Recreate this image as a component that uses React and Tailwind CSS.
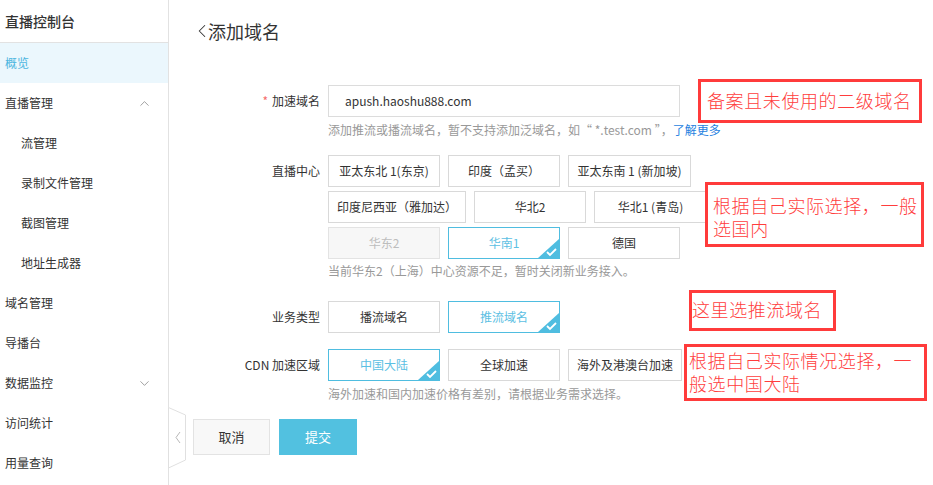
import { ChevronUp, ChevronDown, ChevronLeft } from "lucide-react";

const MENU = [
  { label: "概览", active: true },
  { label: "直播管理", arrow: "up" },
  { label: "流管理", sub: true },
  { label: "录制文件管理", sub: true },
  { label: "截图管理", sub: true },
  { label: "地址生成器", sub: true },
  { label: "域名管理" },
  { label: "导播台" },
  { label: "数据监控", arrow: "down" },
  { label: "访问统计" },
  { label: "用量查询" },
];

// selected corner: blue triangle with a white tick
function Tick() {
  return (
    <svg className="absolute right-0 bottom-0" width="21" height="19" viewBox="0 0 21 19">
      <polygon points="21,0 21,19 0,19" fill="#4fbde0" />
      <path d="M9 13 L12 16 L18 10" stroke="#fff" strokeWidth="1.8" fill="none" />
    </svg>
  );
}

function Opt({ w, children, selected, disabled }) {
  const tone = selected
    ? "border-[#4fbde0] text-[#5cc0e3]"
    : disabled
    ? "border-[#e3e3e3] bg-[#f7f7f7] text-[#bdbdbd]"
    : "border-[#d9d9d9] text-[#333]";
  return (
    <div className={`relative h-8 shrink-0 border flex items-center justify-center text-xs whitespace-nowrap ${tone} ${w}`}>
      {children}
      {selected && <Tick />}
    </div>
  );
}

function Row({ label, star, children, className = "" }) {
  return (
    <div className={`flex items-start ${className}`}>
      <div className="w-[159px] shrink-0 pr-2 h-8 flex items-center justify-end text-xs text-[#333] whitespace-nowrap">
        {star && <span className="text-[#f56c6c] mr-1">*</span>}
        {label}
      </div>
      <div>{children}</div>
    </div>
  );
}

function Note({ className, lines }) {
  return (
    <div className={`absolute border-[3px] border-[#ff3b3b] text-[#ff3d3d] text-[18px] tracking-[0.6px] font-light whitespace-nowrap ${className}`}>
      {lines.map(l => (
        <div key={l} className="leading-[23px] h-[23px]">{l}</div>
      ))}
    </div>
  );
}

export default function App() {
  return (
    <div className="relative w-[933px] h-[485px] overflow-hidden bg-white flex font-['Noto_Sans_CJK_SC',sans-serif] text-[#333]">
      {/* Sidebar */}
      <aside className="w-[169px] shrink-0 border-r border-[#e2e2e2]">
        <div className="h-[43px] border-b border-[#e2e2e2] px-[5px] flex items-center text-sm font-medium">
          直播控制台
        </div>
        {MENU.map(m => (
          <div
            key={m.label}
            className={`h-10 flex items-center justify-between pr-[16px] text-xs ${
              m.sub ? "pl-[21px]" : "pl-[5px]"
            } ${m.active ? "bg-[#ebf7fd] text-[#4cb6e0]" : ""}`}
          >
            <span>{m.label}</span>
            {m.arrow === "up" && <ChevronUp size={15} strokeWidth={1} className="text-[#666]" />}
            {m.arrow === "down" && <ChevronDown size={15} strokeWidth={1} className="text-[#666]" />}
          </div>
        ))}
      </aside>

      {/* collapse tab */}
      <svg className="absolute left-[168px] top-[407px]" width="19" height="62" viewBox="0 0 19 62">
        <polygon points="0.5,0.5 17.5,8 17.5,53 0.5,61" fill="#fff" stroke="#e0e0e0" />
        <path d="M12 25 L8 30.5 L12 36" stroke="#b8b8b8" strokeWidth="1" fill="none" />
      </svg>

      {/* Main */}
      <main className="flex-1">
        <div className="h-[62px] flex items-center pl-[22px] text-lg text-[#333]">
          <ChevronLeft size={22} strokeWidth={1.1} className="-mr-[5px]" />
          <span>添加域名</span>
        </div>

        <Row label="加速域名" star className="mt-[23px]">
          <div className="w-[352px] h-8 border border-[#dcdcdc] flex items-center pl-[16px] text-xs">
            apush.haoshu888.com
          </div>
          <div className="mt-[4px] leading-[18px] text-xs text-[#999] whitespace-nowrap">
            添加推流或播流域名，暂不支持添加泛域名，如“ *.test.com ”，<span className="text-[#1f7fe0]">了解更多</span>
          </div>
        </Row>

        <Row label="直播中心" className="mt-[16px]">
          <div className="flex gap-2">
            <Opt w="w-[112px]">亚太东北 1(东京)</Opt>
            <Opt w="w-[112px]">印度（孟买）</Opt>
            <Opt w="w-[123px]">亚太东南 1 (新加坡)</Opt>
          </div>
          <div className="flex gap-2 mt-1">
            <Opt w="w-[138px]">印度尼西亚（雅加达）</Opt>
            <Opt w="w-[112px]">华北2</Opt>
            <Opt w="w-[113px]">华北1 (青岛)</Opt>
          </div>
          <div className="flex gap-2 mt-1">
            <Opt w="w-[112px]" disabled>华东2</Opt>
            <Opt w="w-[112px]" selected>华南1</Opt>
            <Opt w="w-[112px]">德国</Opt>
          </div>
          <div className="mt-[3px] leading-[18px] text-xs text-[#999] whitespace-nowrap">
            当前华东2（上海）中心资源不足，暂时关闭新业务接入。
          </div>
        </Row>

        <Row label="业务类型" className="mt-[21px]">
          <div className="flex gap-2">
            <Opt w="w-[112px]">播流域名</Opt>
            <Opt w="w-[112px]" selected>推流域名</Opt>
          </div>
        </Row>

        <Row label="CDN 加速区域" className="mt-[16px]">
          <div className="flex gap-2">
            <Opt w="w-[112px]" selected>中国大陆</Opt>
            <Opt w="w-[112px]">全球加速</Opt>
            <Opt w="w-[114px]">海外及港澳台加速</Opt>
          </div>
          <div className="mt-[4px] leading-[18px] text-xs text-[#999] whitespace-nowrap">
            海外加速和国内加速价格有差别，请根据业务需求选择。
          </div>
        </Row>

        <div className="flex gap-[9px] mt-[16px] pl-[24px]">
          <div className="w-[77px] h-9 border border-[#e3e3e3] bg-[#f8f8f8] flex items-center justify-center text-[13px]">
            取消
          </div>
          <div className="w-[78px] h-9 bg-[#52c1e0] text-white flex items-center justify-center text-[13px]">
            提交
          </div>
        </div>
      </main>

      {/* red annotations */}
      <Note
        className="left-[698px] top-[79px] w-[224px] h-[44px] pl-[6px] pt-[7px]"
        lines={["备案且未使用的二级域名"]}
      />
      <Note
        className="left-[705px] top-[182px] w-[219px] h-[65px] pl-[5px] pt-[9px]"
        lines={["根据自己实际选择，一般", "选国内"]}
      />
      <Note
        className="left-[689px] top-[290px] w-[147px] h-[41px] pl-0 pt-[5px]"
        lines={["这里选推流域名"]}
      />
      <Note
        className="left-[684px] top-[344px] w-[243px] h-[57px] pl-[2px] pt-[2px]"
        lines={["根据自己实际情况选择，一", "般选中国大陆"]}
      />
    </div>
  );
}
